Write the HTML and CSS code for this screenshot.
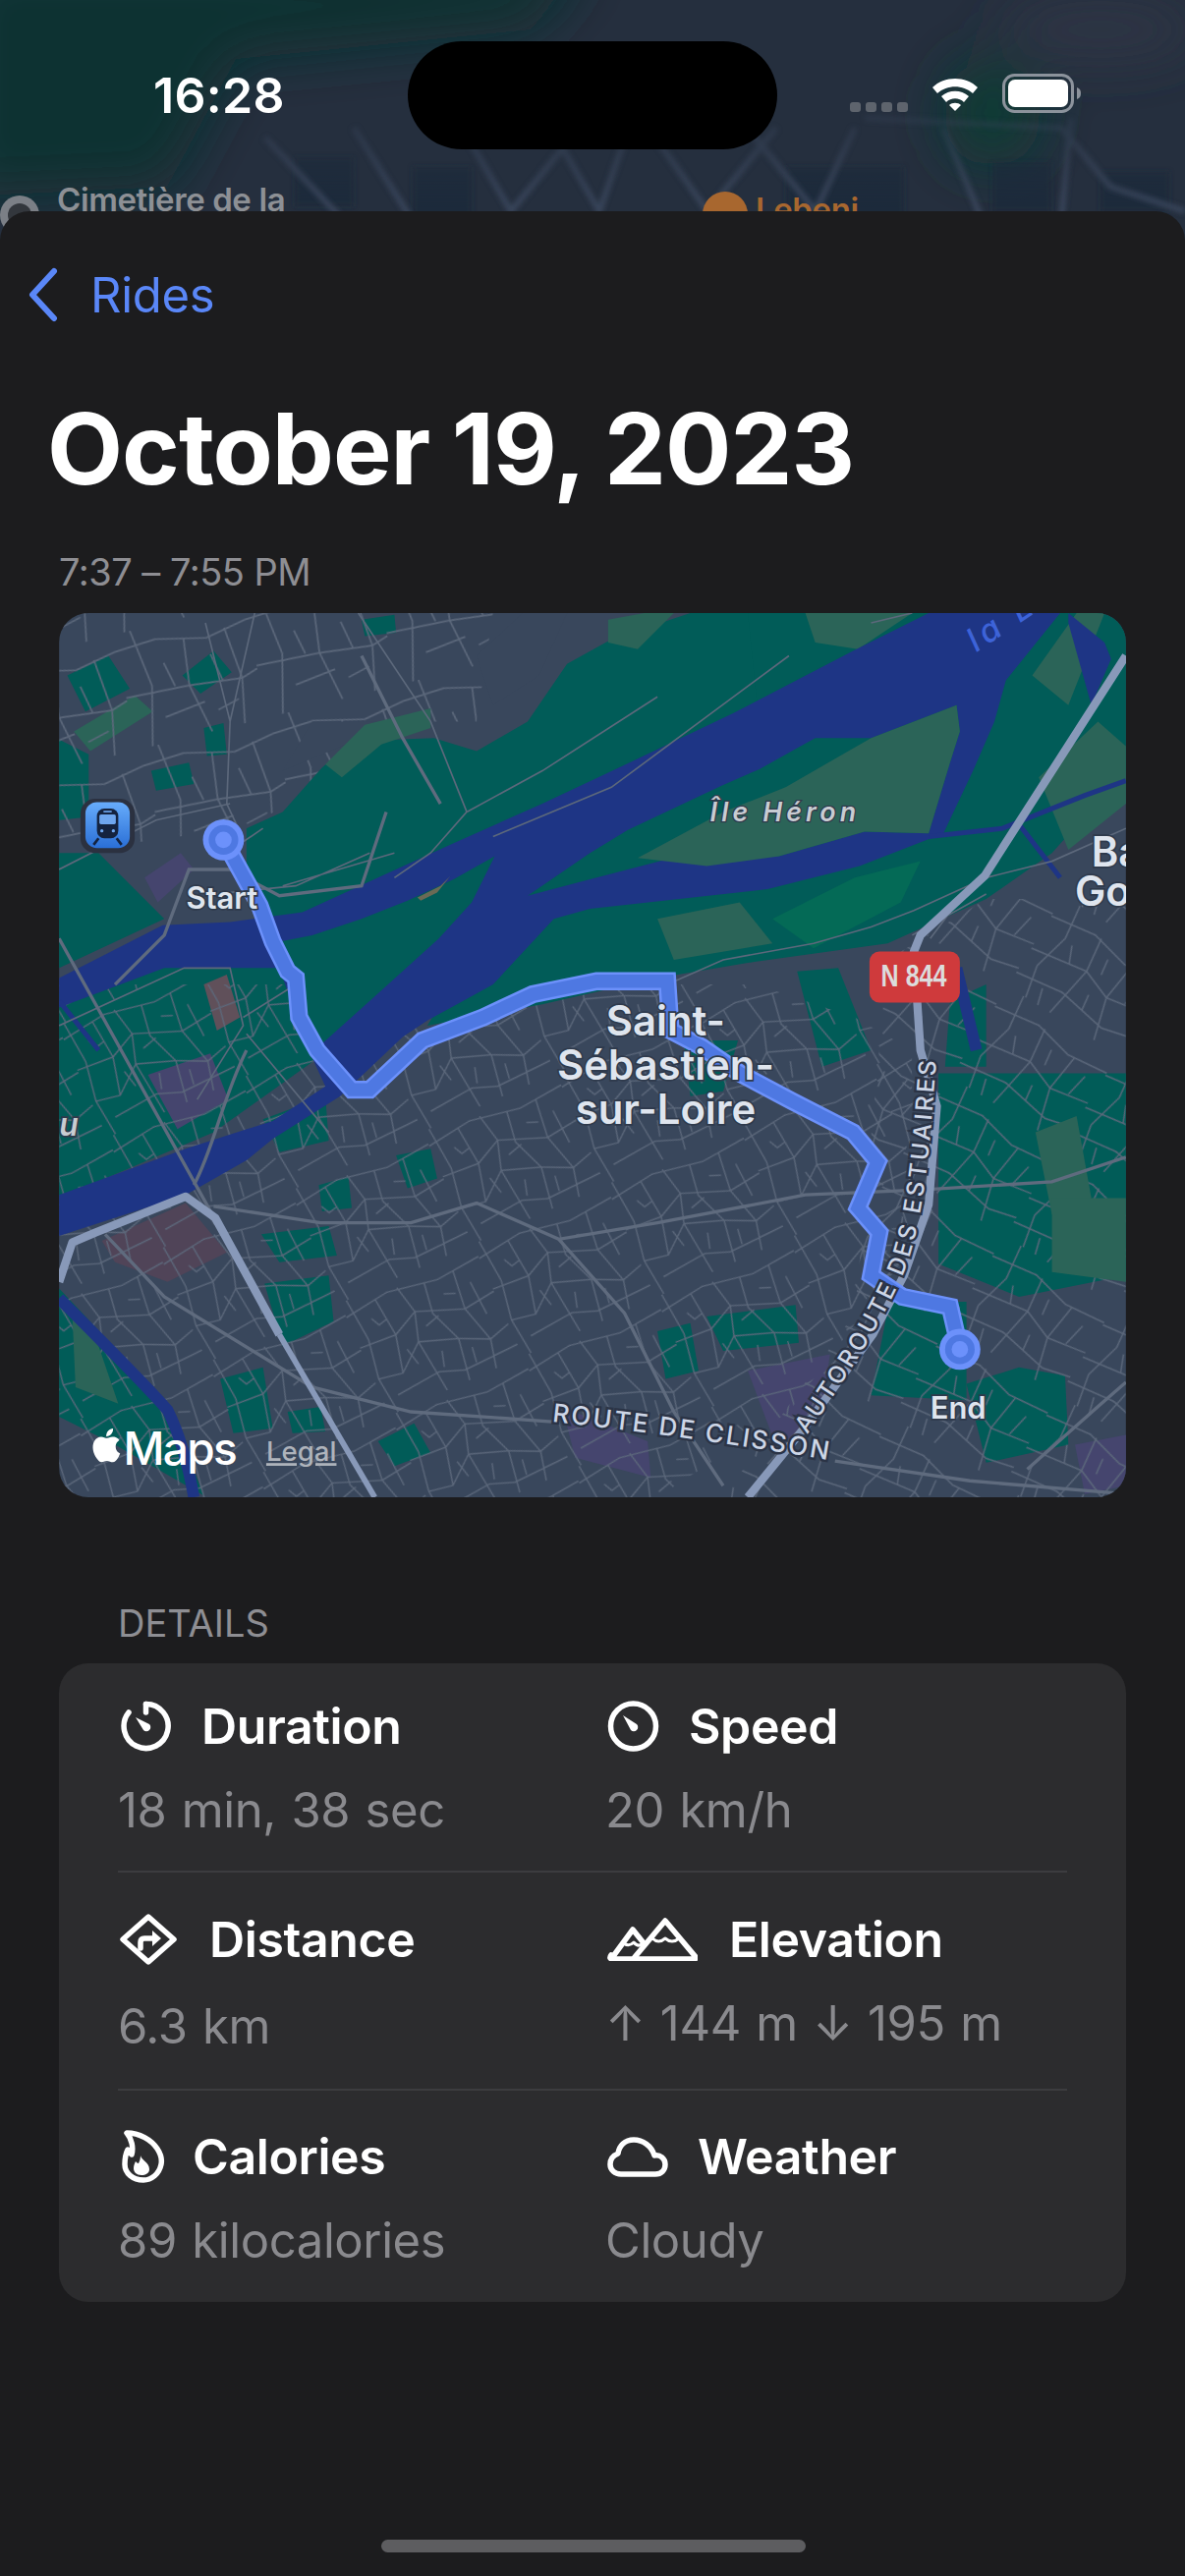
FILE: index.html
```html
<!DOCTYPE html>
<html lang="en">
<head>
  <meta charset="UTF-8" />
  <meta name="viewport" content="width=device-width, initial-scale=1" />
  <title>October 19, 2023</title>
  <link rel="stylesheet" href="styles.css">
</head>
<body>
<div class="screen">

  <div class="top">
    <svg class="backdrop" viewBox="0 0 1206 250">
      <defs>
        <filter id="blurBig"><feGaussianBlur stdDeviation="26" /></filter>
        <filter id="blurLow"><feGaussianBlur stdDeviation="2.5" /></filter>
        <linearGradient id="fadeRoads" x1="0" y1="0" x2="0" y2="1">
          <stop offset="0.3" stop-color="#000" />
          <stop offset="0.85" stop-color="#fff" />
        </linearGradient>
        <mask id="roadMask"><rect width="1206" height="250" fill="url(#fadeRoads)" /></mask>
      </defs>
      <rect width="1206" height="250" fill="#252f3e" />
      <g filter="url(#blurBig)">
        <path d="M-40 -40 H600 L540 30 L240 60 L170 190 L-40 200Z" fill="#0d3230" />
        <ellipse cx="1010" cy="115" rx="50" ry="55" fill="#0b3a36" />
        <ellipse cx="1120" cy="30" rx="100" ry="30" fill="#2e3544" />
      </g>
      <g mask="url(#roadMask)">
        <g class="back-blocks" filter="url(#blurLow)">
          <rect x="300" y="160" width="60" height="50" />
          <rect x="420" y="170" width="60" height="50" />
          <rect x="800" y="170" width="120" height="50" />
          <rect x="1010" y="165" width="60" height="50" />
          <rect x="1120" y="175" width="70" height="40" />
        </g>
        <g class="back-roads" filter="url(#blurLow)">
          <path d="M270 140 L350 225" />
          <path d="M360 130 L420 225" />
          <path d="M470 130 L520 215 L590 130" />
          <path d="M560 130 L610 215 L640 130" />
          <path d="M660 130 L720 215 L790 130" />
          <path d="M760 130 L830 215 L870 130" />
          <path d="M960 130 L1000 225" />
          <path d="M880 120 L1080 130 L1130 190 L1206 215" />
          <path d="M1090 120 L1080 225" />
        </g>
      </g>
      <circle cx="20" cy="219" r="20" fill="#7b7f86" />
      <circle cx="20" cy="219" r="12" fill="#33373d" />
      <text class="back-label" x="58" y="215">Cimetière de la</text>
      <circle cx="738" cy="218" r="23" fill="#a8672f" />
      <text class="back-label back-label-cafe" x="769" y="225">Lebeni</text>
    </svg>

    <div class="status">
      <span class="clock">16:28</span>
      <div class="island"></div>
      <div class="status-icons">
        <div class="signal"><i></i><i></i><i></i><i></i></div>
        <svg class="wifi" viewBox="0 0 50 36">
          <path d="M2 12 C14 0 36 0 48 12 L43 18 C33 9 17 9 7 18Z" />
          <path d="M11 21 C19 14 31 14 39 21 L34 27 C29 22 21 22 16 27Z" />
          <path d="M19 30 C22 27 28 27 31 30 L25 36Z" />
        </svg>
        <svg class="battery" viewBox="0 0 81 40">
          <rect x="1.5" y="1.5" width="70" height="37" rx="11" fill="none" stroke="#8c939c" stroke-width="3" />
          <rect x="6" y="6" width="61" height="28" rx="7" fill="#fff" />
          <path d="M76 14 C79 15 80 17 80 20 C80 23 79 25 76 26Z" fill="#8c939c" />
        </svg>
      </div>
    </div>
  </div>

  <div class="sheet">
    <a class="back">
      <svg class="back-chevron" viewBox="0 0 32 56"><path d="M27 4 L5 28 L27 52" /></svg>
      <span>Rides</span>
    </a>

    <h1 class="title">October 19, 2023</h1>
    <p class="time-range">7:37 – 7:55 PM</p>

    <svg class="map" viewBox="36 374 649 538">
      <defs>
        <pattern id="streetsA" width="130" height="110" patternUnits="userSpaceOnUse" patternTransform="rotate(-24 300 700) scale(0.68)">
          <path class="street" d="M0 14 L42 8 L88 16 L130 12 M6 0 L10 40 L4 76 L8 110 M30 10 L34 46 L26 80 M52 8 L58 34 L50 60 L56 110 M76 14 L72 42 L84 72 L78 110 M104 14 L100 50 L110 84 L104 110 M0 44 L34 46 L58 34 L100 50 L130 46 M4 76 L26 80 L50 60 L84 72 L110 84 L130 78 M14 96 L56 92 L78 100 L130 98 M62 50 L76 46 M88 30 L98 34 M114 30 L116 62 M20 24 L24 32 L32 30 M92 84 L90 98 M38 62 L42 78 M66 76 L62 90" />
        </pattern>
        <pattern id="streetsB" width="110" height="90" patternUnits="userSpaceOnUse" patternTransform="rotate(32 400 800) scale(0.72)">
          <path class="street" d="M0 20 L40 14 L74 22 L110 18 M16 0 L20 30 L12 62 L18 90 M46 14 L50 44 L42 90 M80 22 L76 54 L86 90 M0 52 L50 44 L76 54 L110 48 M0 76 L42 70 L86 78 L110 72 M28 32 L34 46 M60 26 L62 40 M96 30 L92 50 M62 60 L64 74 M26 76 L30 90" />
        </pattern>
        <pattern id="streetsC" width="96" height="84" patternUnits="userSpaceOnUse" patternTransform="rotate(-14 200 430) scale(0.85)">
          <path class="street" d="M0 12 L30 10 L66 18 L96 12 M14 0 L20 42 L10 84 M50 14 L46 48 L54 84 M80 14 L84 52 L78 84 M0 46 L46 48 L84 52 L96 48 M32 28 L36 46 M66 30 L70 50 M24 66 L54 62 M62 70 L78 66" />
        </pattern>
        <clipPath id="cityClip"><path d="M36 600 H460 L520 620 L555 640 L555 760 L480 860 L400 912 H36Z" /></clipPath>
        <clipPath id="eastClip"><path d="M540 585 L600 548 H685 V912 H440 L520 800Z" /></clipPath>
        <clipPath id="northClip"><path d="M36 374 H300 L290 440 L210 440 L200 480 L145 505 L36 520Z" /></clipPath>
        <linearGradient id="trainFill" x1="0" y1="0" x2="0" y2="1">
          <stop offset="0" stop-color="#67acfb" />
          <stop offset="1" stop-color="#2a6fd6" />
        </linearGradient>
        <path id="clissonLine" d="M336 866 C390 872 450 880 508 890" />
        <path id="estuaireLine" d="M491 874 C520 832 540 800 552 770 C562 740 566 700 570 640" />
      </defs>

      <rect x="36" y="374" width="649" height="538" fill="#39475c" />

      <!-- parks under the streets -->
      <g class="park">
        <path d="M36 520 L60 520 L100 560 L36 590Z" />
        <path d="M36 451 L54 460 L54 498 L36 500Z" />
        <path d="M41 412 L66 400 L79 420 L52 434Z" />
        <path d="M111 412 L130 397 L141 410 L122 423Z" />
        <path d="M92 470 L115 465 L118 478 L95 482Z" />
        <path d="M124 444 L136 441 L138 460 L126 461Z" />
        <path d="M220 378 L240 375 L241 386 L222 388Z" />
        <path d="M36 605 L170 565 L200 640 L130 690 L36 730Z" />
        <path d="M36 785 L102 855 L124 911 L70 880 L36 863Z" />
        <path d="M134 840 L160 833 L166 870 L142 873Z" />
        <path d="M175 860 L195 857 L198 872 L178 873Z" />
        <path d="M230 878 L252 867 L262 885 L240 893Z" />
        <path d="M194 722 L212 717 L214 736 L196 738Z" />
        <path d="M159 752 L200 747 L205 765 L170 769Z" />
        <path d="M161 782 L200 777 L203 805 L172 820Z" />
        <path d="M241 704 L262 700 L266 718 L248 724Z" />
        <path d="M400 811 L420 806 L425 835 L405 840Z" />
        <path d="M430 802 L484 795 L486 818 L440 823Z" />
        <path d="M416 634 H449 L440 665 L420 668Z" />
        <path d="M160 682 L198 668 L200 695 L170 702Z" />
        <path d="M541 793 L588 793 L588 853 L530 850Z" />
        <path d="M571 654 H685 V777 L620 790 L571 770Z" />
        <path d="M588 843 L620 833 L648 838 L650 880 L600 891Z" />
        <path d="M485 592 L510 590 L530 640 L500 650Z" />
        <path d="M578 610 L600 600 L600 650 L575 650Z" />
      </g>
      <g class="park-light">
        <path d="M45 446 L82 424 L93 434 L55 458Z" />
      </g>
      <g class="lot-purple">
        <path d="M90 655 L128 642 L139 670 L108 688 Z" />
        <path d="M455 835 L505 825 L500 860 L480 880 L470 875Z" />
        <path d="M654 880 L685 874 V905 L660 910Z" />
        <path d="M342 857 L394 878 L396 900 L350 888Z" />
        <path d="M88 535 L110 520 L118 530 L96 550Z" />
      </g>
      <path class="lot-red" d="M62 756 L113 733 L138 763 L102 781 L70 769Z" />
      <path class="lot-brown" d="M124 600 L138 594 L146 620 L132 628Z" />

      <!-- street grids -->
      <rect x="36" y="374" width="649" height="538" fill="url(#streetsA)" clip-path="url(#cityClip)" />
      <rect x="36" y="374" width="649" height="538" fill="url(#streetsB)" clip-path="url(#eastClip)" />
      <rect x="36" y="374" width="649" height="538" fill="url(#streetsC)" clip-path="url(#northClip)" />

      <!-- open land and parks without streets -->
      <g class="park">
        <path d="M150 530 L150 505 L172 495 L196 468 L215 452 L264 450 L290 458 L321 440 L345 405 L372 390 L420 374 H570 L446 437 L383 467 L330 492 L276 516 L190 560 L158 560Z" />
        <path d="M455 374 H685 V470 L640 520 L600 548 L540 575 L460 586 L400 596 L330 612 L260 625 L300 560 L359 540 L470 520Z" />
      </g>
      <path class="land-patch" d="M172 470 L215 452 L230 440 L190 440Z" />
      <path class="land-patch" d="M318 374 H345 L328 412 L300 430 L290 400Z" />
      <g class="park-light">
        <path d="M198 466 L222 442 L262 432 L262 444 L232 454 L208 474Z" />
        <path d="M370 378 L392 374 H410 L388 396 L370 392Z" />
        <path d="M490 374 H555 L522 396 L496 392Z" />
        <path d="M632 474 L668 440 L685 455 V490 L650 518Z" />
        <path d="M628 412 L655 374 H672 L650 430Z" />
        <path d="M400 560 L450 550 L470 575 L410 585Z" />
        <path d="M630 690 L655 680 L664 730 L640 740Z" />
        <path d="M640 730 H685 V781 L640 775Z" />
        <path d="M44 800 L60 820 L72 855 L46 845Z" />
      </g>
      <g class="park-bright">
        <path d="M470 560 L520 535 L560 525 L548 550 L495 578Z" />
      </g>
      <path class="water" d="M36 596 L99 564 L140 562 L184 556 L230 535 L276 514 L330 490 L383 465 L446 435 L519 397 L565 374 H645 L612 415 L605 440 L592 470 L574 508 L523 528 L467 542 L359 554 L337 560 L300 600 L260 622 L245 632 L207 668 L166 694 L150 707 L113 728 L36 753 V728 L113 700 L166 683 L198 662 L186 636 L170 590 L100 590 L36 614Z" />
      <path class="water" d="M650 374 L672 392 L676 402 L664 430 L650 380Z" />
      <path class="water-line" d="M36 791 C60 815 90 845 102 859 C110 875 115 895 118 912" />
      <path class="water-thin" d="M565 510 L610 505 L660 485 L685 476" />
      <path class="water-thin" d="M618 500 L645 535" />
      <path class="water-thin" d="M36 610 L60 640" />
      <path class="water-line" d="M582 590 L594 640" />

      <!-- islands in the river -->
      <g class="park">
        <path d="M170 574 L190 570 L220 560 L248 549 L276 536 L301 522 L287 550 L267 572 L225 610 L196 636 L186 625Z" />
        <path d="M321 546 L359 520 L382 506 L439 479 L462 469 L496 450 L530 450 L582 430 L584 446 L578 465 L565 508 L526 507 L474 522 L405 524 L359 536Z" />
      </g>
      <path class="park-light" d="M478 480 L530 450 L582 430 L584 446 L578 465 L565 508 L526 507 L474 522 L430 528 L388 523 L440 495Z" />
      <path class="islet" d="M254 547 L268 540 L274 534 L266 544 L256 549Z" />

      <!-- local roads -->
      <g class="street-main">
        <path d="M36 530 L95 500 L140 490 M125 380 L140 440 L138 490 L145 505 M155 374 L140 440" />
        <path d="M172 540 L240 520 M130 545 L180 540 L225 520 M138 520 L160 505" />
        <path d="M36 625 L112 590 L140 590 L148 625 L120 670 M148 620 L180 600 M150 630 L200 690" />
        <path d="M284 495 L330 470 L400 425 M300 510 L372 480 L480 400 M530 380 L555 374" />
        <path d="M406 600 L440 585 L495 575 L530 565 L556 555 L600 535 L640 525 L685 505" />
        <path d="M555 570 L600 545 M566 572 L590 540" />
        <path d="M218 374 L262 440 L284 495 L262 520 L240 535" />
      </g>
      <g class="road">
        <path d="M36 572 L127 736 L170 813 L228 912" />
        <path d="M64 752 L100 790 L190 845 L250 860 L336 866" />
        <path d="M508 890 L590 902 L685 910" />
        <path d="M150 640 C135 670 130 700 118 722" />
        <path d="M130 735 L195 745 L250 745 L290 733 L340 755 L400 745 L490 728 L560 725 L640 720 L685 705" />
        <path d="M340 755 L380 800 L410 860 L440 905" />
        <path d="M235 495 L220 540 L170 546 L140 530 L115 530 L100 570 L70 600" />
        <path d="M220 400 L245 450 L268 490" />
        <path d="M625 895 L670 855 L685 842" />
      </g>

      <!-- highways -->
      <g class="highway">
        <path d="M36 781 L44 757 L58 751 L113 729 L131 742 L170 813" />
        <path class="highway-thin" d="M170 813 L228 912" />
        <path d="M685 400 L599 534 L560 570 L556 580 L560 640 L570 674 L565 734 L550 777 L531 813 L490 869 L455 912" />
      </g>

      <!-- route -->
      <path class="route-edge" d="M136 512 L158 552 L166 574 L175 592 L180 596 L182 620 L193 640 L214 664 L225 664 L257 634 L294 620 L324 606 L363 598 H406 L408 628 L427 638 L450 654 L482 671 L519 690 L534 708 L522 736 L535 751 L530 777 L549 790 L578 796 L584 822" />
      <path class="route-core" d="M136 512 L158 552 L166 574 L175 592 L180 596 L182 620 L193 640 L214 664 L225 664 L257 634 L294 620 L324 606 L363 598 H406 L408 628 L427 638 L450 654 L482 671 L519 690 L534 708 L522 736 L535 751 L530 777 L549 790 L578 796 L584 822" />
      <circle class="pin-out" cx="136" cy="512" r="12.5" />
      <circle class="pin-mid" cx="136" cy="512" r="9" />
      <circle class="pin-out" cx="136" cy="512" r="5" />
      <circle class="pin-out" cx="584" cy="822" r="12.5" />
      <circle class="pin-mid" cx="584" cy="822" r="9" />
      <circle class="pin-out" cx="584" cy="822" r="5" />

      <!-- train station -->
      <rect x="49" y="487" width="33" height="33" rx="9" fill="#2b3140" />
      <rect x="52" y="489" width="27" height="28" rx="7" fill="url(#trainFill)" />
      <g>
        <rect x="59" y="493" width="13" height="18" rx="4.5" fill="#14233f" />
        <rect x="60.5" y="496.5" width="10" height="6" rx="1" fill="#6ea6ee" />
        <rect x="63" y="494.3" width="5" height="1" fill="#6ea6ee" />
        <circle cx="62" cy="506.5" r="1" fill="#6ea6ee" />
        <circle cx="69" cy="506.5" r="1" fill="#6ea6ee" />
        <path d="M60 511 L57 515 M71 511 L74 515" stroke="#14233f" stroke-width="1.6" />
      </g>

      <!-- labels -->
      <text class="map-label map-label-small" x="135" y="554" text-anchor="middle">Start</text>
      <text class="map-label map-label-small" x="583" y="864" text-anchor="middle">End</text>
      <text class="map-label map-label-town" x="405" y="631" text-anchor="middle">Saint-</text>
      <text class="map-label map-label-town" x="405" y="658" text-anchor="middle">Sébastien-</text>
      <text class="map-label map-label-town" x="405" y="685" text-anchor="middle">sur-Loire</text>
      <text class="map-label map-label-town" x="664" y="528">Ba</text>
      <text class="map-label map-label-town" x="654" y="552">Go</text>
      <text class="map-label map-label-island" x="432" y="501">Île Héron</text>
      <text class="map-river" transform="translate(594 398) rotate(-34)">la L</text>
      <text class="map-label map-label-u" x="36" y="692">u</text>
      <text class="map-road-name"><textPath href="#clissonLine" startOffset="0">ROUTE DE CLISSON</textPath></text>
      <text class="map-road-name map-road-name-tight"><textPath href="#estuaireLine" startOffset="0">AUTOROUTE DES ESTUAIRES</textPath></text>

      <rect x="529" y="580" width="55" height="31" rx="6" fill="#cf3a3c" />
      <text class="map-shield" x="556" y="601" text-anchor="middle" textLength="40" lengthAdjust="spacingAndGlyphs">N 844</text>

      <!-- maps mark -->
      <path transform="translate(54 869)" fill="#fff" d="M16.4 12.2c0-2.6 2.1-3.8 2.2-3.9-1.2-1.8-3.1-2-3.7-2-1.6-.2-3.1.9-3.9.9-.8 0-2.1-.9-3.4-.9-1.7 0-3.3 1-4.2 2.6-1.8 3.1-.5 7.7 1.3 10.2.9 1.2 1.9 2.6 3.2 2.6 1.3-.1 1.8-.8 3.3-.8 1.6 0 2 .8 3.4.8 1.4 0 2.3-1.3 3.1-2.5 1-1.4 1.4-2.8 1.4-2.9 0 0-2.7-1-2.7-4.1zM13.8 4.5c.7-.9 1.2-2.1 1-3.3-1 0-2.3.7-3 1.5-.7.8-1.2 2-1.1 3.2 1.2.1 2.4-.6 3.1-1.4z" />
      <text class="map-mark" x="75" y="892">Maps</text>
      <text class="map-legal" x="162" y="890">Legal</text>
    </svg>

    <p class="section-label">DETAILS</p>

    <div class="card">
      <div class="row">
        <div class="stat">
          <div class="stat-head">
            <svg class="icon icon-timer" viewBox="0 0 53 54">
              <path d="M26.5 4.5 A22.5 22.5 0 1 1 9 13" /><path d="M26.5 4.5 V13" />
              <path class="solid" d="M16 18 L30 25 A4 4 0 0 1 24 31Z" />
            </svg>
            <span>Duration</span>
          </div>
          <div class="stat-value">18 min, 38 sec</div>
        </div>
        <div class="stat">
          <div class="stat-head">
            <svg class="icon icon-timer" viewBox="0 0 53 54">
              <circle cx="26.5" cy="27" r="23" />
              <path class="solid" d="M16 16 L30 25 A4 4 0 0 1 24 31Z" />
            </svg>
            <span>Speed</span>
          </div>
          <div class="stat-value">20 km/h</div>
        </div>
      </div>

      <div class="row">
        <div class="stat">
          <div class="stat-head">
            <svg class="icon icon-distance" viewBox="0 0 58 52">
              <path d="M29 3 L55 26 L29 49 L3 26Z" />
              <path d="M21 35 V29 Q21 25 25 25 H35" />
              <path class="solid" d="M33 17 L42 25 L33 33Z" />
            </svg>
            <span>Distance</span>
          </div>
          <div class="stat-value stat-value-low">6.3 km</div>
        </div>
        <div class="stat">
          <div class="stat-head">
            <svg class="icon icon-elevation" viewBox="0 0 92 44">
              <path d="M4 42 L26 12 L38 27 M30 42 H6 Q1 42 4 38" />
              <path d="M28 40 L59 3 L90 40 Q91 42 88 42 H31 Q27 42 28 40Z" />
              <path class="thin" d="M46 21 Q52 27 59 21 Q66 27 73 21 M17 26 Q22 30 27 25 Q31 30 35 27" />
            </svg>
            <span>Elevation</span>
          </div>
          <div class="stat-value">↑ 144 m ↓ 195 m</div>
        </div>
      </div>

      <div class="row">
        <div class="stat">
          <div class="stat-head">
            <svg class="icon icon-flame" viewBox="0 0 46 54">
              <path d="M7 3 C20 3 32 10 38 19 C42 25 43 30 42 35 C40 45 32 51 24 51 C13 51 5 44 5 35 C5 29 6 24 8 20 C9 22 10 24 12 25 C14 18 12 9 7 3Z" />
              <path class="solid" d="M21 26 C22 31 30 33 30 40 C30 44 26 46 22 46 C17 46 14 43 14 39 C14 36 15 34 16 32 C17 33 18 34 19 34 C20 32 21 29 21 26Z" />
            </svg>
            <span>Calories</span>
          </div>
          <div class="stat-value">89 kilocalories</div>
        </div>
        <div class="stat">
          <div class="stat-head">
            <svg class="icon icon-cloud" viewBox="0 0 62 42">
              <path d="M14 39 H49 C55 39 59 35 59 29 C59 23 54 19 48 20 C45 10 36 4 27 4 C18 4 12 10 11 18 C6 20 3 24 3 29 C3 35 8 39 14 39Z" />
            </svg>
            <span>Weather</span>
          </div>
          <div class="stat-value">Cloudy</div>
        </div>
      </div>
    </div>

    <div class="home-bar"></div>
  </div>

</div>
</body>
</html>
```

FILE: styles.css
```css
* {
  box-sizing: border-box;
}
body {
  margin: 0;
  background-color: #1c1c1e;
  font-family: "Inter", "Liberation Sans", sans-serif;
  color: #fff;
}
.screen {
  width: 1206px;
  height: 2622px;
  overflow: hidden;
  display: flex;
  flex-direction: column;
}

/* status bar */
.top {
  position: relative;
  height: 215px;
  flex: none;
}
.backdrop {
  position: absolute;
  left: 0;
  top: 0;
  width: 1206px;
  height: 250px;
}
.back-roads path {
  fill: none;
  stroke: #39445a;
  stroke-width: 6;
}
.back-blocks rect {
  fill: #1f2a3a;
}
.back-label {
  font-size: 33px;
  font-weight: 600;
  fill: #8d9095;
  letter-spacing: -0.4px;
}
.back-label-cafe {
  fill: #a8672f;
}
.status {
  position: relative;
  display: flex;
  align-items: center;
  height: 110px;
  margin-top: 42px;
}
.clock {
  width: 132px;
  margin-left: 156px;
  font-size: 50px;
  font-weight: 600;
  letter-spacing: 0.3px;
  white-space: nowrap;
}
.island {
  width: 376px;
  height: 110px;
  margin-left: 127px;
  background: #000;
  border-radius: 55px;
}
.status-icons {
  display: flex;
  align-items: center;
  margin-left: 74px;
  height: 40px;
  margin-top: -4px;
}
.signal {
  display: flex;
  gap: 5px;
  margin-right: 23px;
  margin-top: 28px;
}
.signal i {
  width: 11px;
  height: 10px;
  border-radius: 3px;
  background: #5e646d;
}
.wifi {
  width: 50px;
  height: 36px;
  margin-right: 23px;
  fill: #fff;
}
.battery {
  width: 81px;
  height: 40px;
}

/* sheet */
.sheet {
  flex: 1;
  position: relative;
  background-color: #1c1c1e;
  border-radius: 30px 30px 0 0;
  padding: 55px 60px 0;
}
.back {
  display: flex;
  align-items: center;
  gap: 32px;
  height: 60px;
  margin-left: -32px;
  font-size: 49px;
  letter-spacing: -0.3px;
  color: #5a87f8;
}
.back-chevron {
  width: 32px;
  height: 56px;
  fill: none;
  stroke: #5a87f8;
  stroke-width: 6;
  stroke-linecap: round;
  stroke-linejoin: round;
}
.title {
  margin: 67px 0 0 -12px;
  height: 120px;
  font-size: 100px;
  line-height: 120px;
  font-weight: 700;
  letter-spacing: -1px;
  white-space: nowrap;
}
.time-range {
  margin: 40px 0 0;
  height: 50px;
  font-size: 38px;
  line-height: 50px;
  color: #8e8e93;
  letter-spacing: -0.5px;
}
.map {
  display: block;
  width: 1086px;
  height: 900px;
  margin-top: 17px;
  border-radius: 30px;
}

/* map layers */
.park { fill: #015c58; }
.park-light { fill: #2b6458; }
.park-bright { fill: #046a56; }
.land-patch { fill: #39475c; }
.lot-purple { fill: #45456e; }
.lot-red { fill: #504458; }
.lot-brown { fill: #60505a; }
.water { fill: #1e3585; }
.water-line {
  fill: none;
  stroke: #1e3585;
  stroke-width: 7;
}
.water-thin {
  fill: none;
  stroke: #1e3585;
  stroke-width: 3;
}
.islet { fill: #6a6a55; }
.street {
  fill: none;
  stroke: #5c687b;
  stroke-width: 1.2;
}
.street-main {
  fill: none;
  stroke: #5c687b;
  stroke-width: 1;
}
.road {
  fill: none;
  stroke: #5f6b7e;
  stroke-width: 2;
}
.highway {
  fill: none;
  stroke: #8899b9;
  stroke-width: 5;
  stroke-linejoin: round;
}
.highway-thin {
  stroke-width: 3.5;
}
.route-edge {
  fill: none;
  stroke: #6c91fb;
  stroke-width: 11;
}
.route-core {
  fill: none;
  stroke: #4e78e2;
  stroke-width: 8;
}
.pin-out { fill: #6c91fb; }
.pin-mid { fill: #4e78e2; }
.map-label {
  fill: #dfe5ee;
  font-weight: 600;
  paint-order: stroke;
  stroke: #2f3a4c;
  stroke-width: 2px;
}
.map-label-small {
  font-size: 18.5px;
}
.map-label-town {
  font-size: 25px;
}
.map-label-island {
  font-size: 16px;
  font-style: italic;
  letter-spacing: 2.5px;
  fill: #c8ccd2;
  stroke-width: 1.5px;
}
.map-label-u {
  font-size: 19px;
  font-style: italic;
  fill: #c8ccd2;
}
.map-river {
  font-size: 20px;
  font-style: italic;
  font-weight: 500;
  letter-spacing: 3px;
  fill: #3d63d8;
}
.map-road-name {
  font-size: 15.5px;
  font-weight: 500;
  letter-spacing: 1.3px;
  fill: #cdd6e6;
  paint-order: stroke;
  stroke: #2b3446;
  stroke-width: 3px;
}
.map-road-name-tight {
  font-size: 14.5px;
  letter-spacing: 1.8px;
}
.map-shield {
  font-family: "Liberation Sans", sans-serif;
  font-size: 19px;
  font-weight: 700;
  fill: #dcdcdc;
}
.map-mark {
  font-size: 27.5px;
  font-weight: 500;
  letter-spacing: -1px;
  fill: #fff;
}
.map-legal {
  font-size: 16.5px;
  font-weight: 500;
  fill: #aeb3bb;
  text-decoration: underline;
}

/* details */
.section-label {
  margin: 103px 0 0 60px;
  height: 50px;
  font-size: 38px;
  line-height: 50px;
  color: #8e8e93;
}
.card {
  margin-top: 16px;
  padding: 0 60px;
  height: 650px;
  background-color: #2c2c2e;
  border-radius: 30px;
}
.row {
  display: grid;
  grid-template-columns: 496px 1fr;
  padding: 38px 0 36px;
  border-bottom: 2px solid #3c3c3f;
}
.row:first-child {
  padding-top: 34px;
  padding-bottom: 31px;
}
.row:last-child {
  padding-top: 37px;
  border-bottom: none;
}
.stat-head {
  display: flex;
  align-items: center;
  gap: 30px;
  height: 60px;
  font-size: 50px;
  font-weight: 600;
  letter-spacing: -0.4px;
}
.stat-value {
  margin-top: 26px;
  height: 60px;
  font-size: 49px;
  line-height: 60px;
  letter-spacing: -0.4px;
  word-spacing: 2px;
  color: #8a8a8e;
}
.stat-value-low {
  margin-top: 29px;
  height: 57px;
}
.icon {
  margin-left: 2px;
  flex: none;
  fill: none;
  stroke: #fff;
  stroke-width: 5.5;
  stroke-linecap: round;
  stroke-linejoin: round;
}
.icon .solid {
  fill: #fff;
  stroke: none;
}
.icon .thin {
  stroke-width: 3;
}
.icon-timer { width: 53px; height: 54px; }
.icon-distance { width: 58px; height: 52px; margin-right: 3px; }
.icon-elevation { width: 92px; height: 44px; margin-right: 2px; }
.icon-flame { width: 46px; height: 54px; margin-right: -2px; }
.icon-cloud { width: 62px; height: 42px; }

.home-bar {
  width: 432px;
  height: 13px;
  margin: 242px 0 0 328px;
  border-radius: 7px;
  background: #5d5d60;
}
```
